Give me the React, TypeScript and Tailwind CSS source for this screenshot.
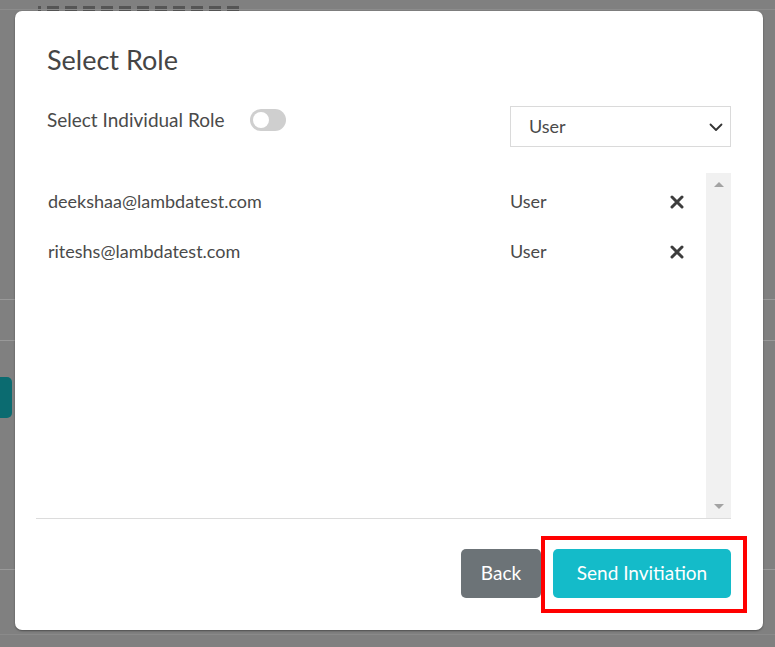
import React from "react";

export default function App() {
  const rows = [
    { email: "deekshaa@lambdatest.com", role: "User" },
    { email: "riteshs@lambdatest.com", role: "User" },
  ];
  return (
    <div
      className="relative w-[775px] h-[647px] overflow-hidden bg-[#808080]"
      style={{ fontFamily: "Lato, 'Open Sans', sans-serif" }}
    >
      {/* background page remnants */}
      <div className="absolute left-[38px] top-[6px] flex gap-[6px] opacity-60">
        {[3, 12, 12, 12, 12, 12, 12, 12, 12, 12, 12, 12].map((w, i) => (
          <div key={i} className="h-[5px] bg-[#3a3a3a]" style={{ width: w }} />
        ))}
      </div>
      <div className="absolute left-0 top-[9px] w-full h-px bg-[#8c8c8c]" />
      <div className="absolute left-0 top-[299px] w-full h-px bg-[#999]" />
      <div className="absolute left-0 top-[340px] w-full h-px bg-[#999]" />
      <div className="absolute left-0 top-[569px] w-full h-px bg-[#999]" />
      <div className="absolute left-[-8px] top-[377px] w-[20px] h-[41px] rounded-[5px] bg-[#0b6b70]" />
      <div className="absolute left-0 top-[634px] w-full h-px bg-[#8a8a8a]" />

      {/* modal */}
      <div className="absolute left-[15px] top-[11px] w-[748px] h-[619px] rounded-[7px] bg-white flex flex-col shadow-[0_1px_2px_rgba(0,0,0,0.4)]">
        <div className="pl-[32px] pr-[32px] pt-[32px]">
          <h2 className="text-[27px] leading-[34px] text-[#454545]">Select Role</h2>
          <div className="mt-[29px] flex items-start justify-between">
            <div className="flex items-center gap-[25px] pt-[3px]">
              <span className="text-[19px] leading-[22px] text-[#4a4a4a]">Select Individual Role</span>
              <div className="w-[36px] h-[22px] rounded-full bg-[#cfcfcf] flex items-center px-[3px]">
                <div className="w-[16px] h-[16px] rounded-full bg-white" />
              </div>
            </div>
            <div className="w-[221px] h-[41px] border border-[#dadada] flex items-center justify-between pl-[18px] pr-[6px]">
              <span className="text-[18px] text-[#4a4a4a]">User</span>
              <svg width="16" height="16" viewBox="0 0 16 16" fill="none">
                <path d="M2.5 5.5 8 11l5.5-5.5" stroke="#333" strokeWidth="1.8" strokeLinecap="round" strokeLinejoin="round" />
              </svg>
            </div>
          </div>
        </div>

        <div className="mx-[21px] mr-[32px] mt-[26px] h-[346px] border-b border-[#dcdcdc] flex">
          <div className="flex-1 flex flex-col pt-[12px]">
            {rows.map((r) => (
              <div key={r.email} className="h-[50px] flex items-center pl-[12px] pb-[17px]">
                <span className="w-[462px] text-[18px] text-[#4a4a4a]">{r.email}</span>
                <span className="w-[160px] text-[18px] text-[#4a4a4a]">{r.role}</span>
                <svg width="14" height="14" viewBox="0 0 14 14">
                  <path d="M2 2 12 12M12 2 2 12" stroke="#3d3d3d" strokeWidth="3" strokeLinecap="round" />
                </svg>
              </div>
            ))}
          </div>
          <div className="w-[25px] bg-[#f1f1f1] flex flex-col items-center justify-between py-[9px]">
            <div className="w-0 h-0 border-l-[5px] border-r-[5px] border-b-[5px] border-l-transparent border-r-transparent border-b-[#a3a3a3]" />
            <div className="w-0 h-0 border-l-[5px] border-r-[5px] border-t-[5px] border-l-transparent border-r-transparent border-t-[#a3a3a3]" />
          </div>
        </div>

        <div className="flex justify-end gap-[12px] pr-[32px] mt-[30px]">
          <button className="w-[80px] h-[49px] rounded-[5px] bg-[#6c7377] text-white text-[19px]">Back</button>
          <button className="w-[178px] h-[49px] rounded-[5px] bg-[#14bbc9] text-white text-[19px]">Send Invitiation</button>
        </div>
      </div>

      {/* annotation */}
      <div className="absolute left-[541px] top-[536px] w-[206px] h-[77px] border-[4px] border-[#ff0000]" />
    </div>
  );
}
